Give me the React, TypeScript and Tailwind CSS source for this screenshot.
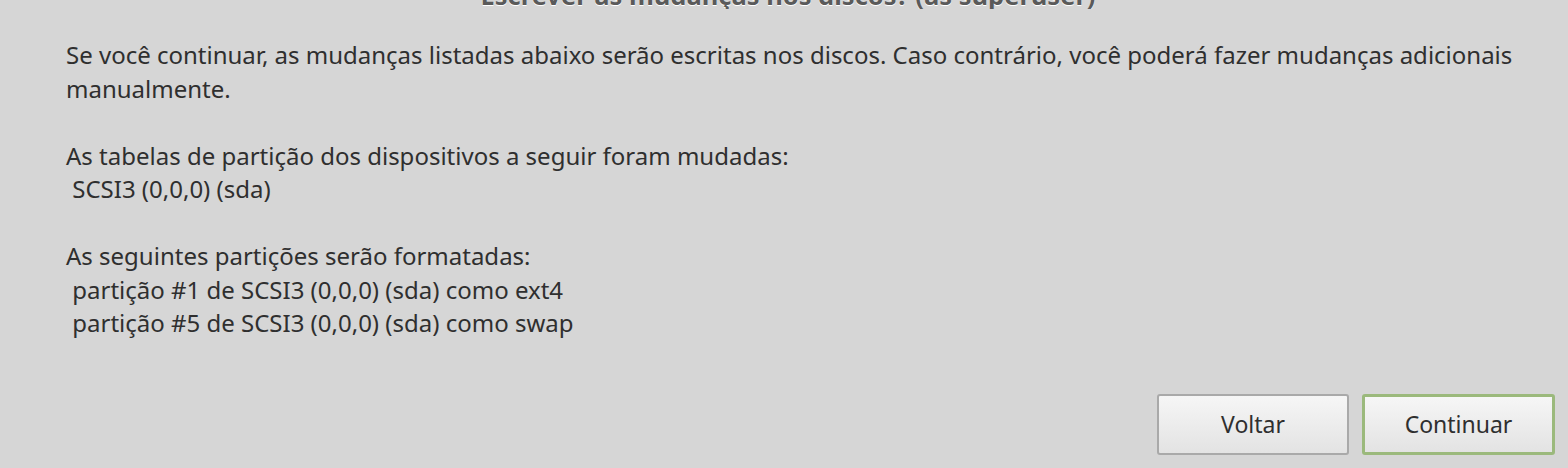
export default function App() {
  return (
    <div
      className="w-[1568px] h-[468px] overflow-hidden bg-[#d6d6d6] text-[#2f2f2f] flex flex-col"
      style={{ fontFamily: '"Noto Sans", sans-serif' }}
    >
      {/* Title bar (mostly scrolled out of view) */}
      <div className="h-[9px] overflow-hidden relative">
        <div className="absolute left-0 right-0 bottom-0 pl-[8px] text-center text-[25.5px] font-bold leading-[28px] text-[#5a5a5a] [text-shadow:0_1px_0_#ffffff]">
          Escrever as mudanças nos discos? (as superuser)
        </div>
      </div>

      <div className="flex-1 pl-[66px] pr-[40px] pt-[29px] text-[24px] leading-[33.5px] whitespace-pre-wrap">
        {`Se você continuar, as mudanças listadas abaixo serão escritas nos discos. Caso contrário, você poderá fazer mudanças adicionais manualmente.

As tabelas de partição dos dispositivos a seguir foram mudadas:
 SCSI3 (0,0,0) (sda)

As seguintes partições serão formatadas:
 partição #1 de SCSI3 (0,0,0) (sda) como ext4
 partição #5 de SCSI3 (0,0,0) (sda) como swap`}
      </div>

      <div className="flex justify-end gap-[13px] pr-[13px] pb-[13px]">
        <button className="w-[192px] h-[61px] rounded-[3px] border-2 border-[#a9a9a9] bg-gradient-to-b from-[#f6f6f6] to-[#e3e3e3] text-[23px] text-[#2f2f2f]">
          Voltar
        </button>
        <button className="w-[193px] h-[61px] rounded-[3px] border-[3px] border-[#9bb97c] bg-gradient-to-b from-[#f6f6f6] to-[#e3e3e3] text-[23px] text-[#2f2f2f]">
          Continuar
        </button>
      </div>
    </div>
  );
}
